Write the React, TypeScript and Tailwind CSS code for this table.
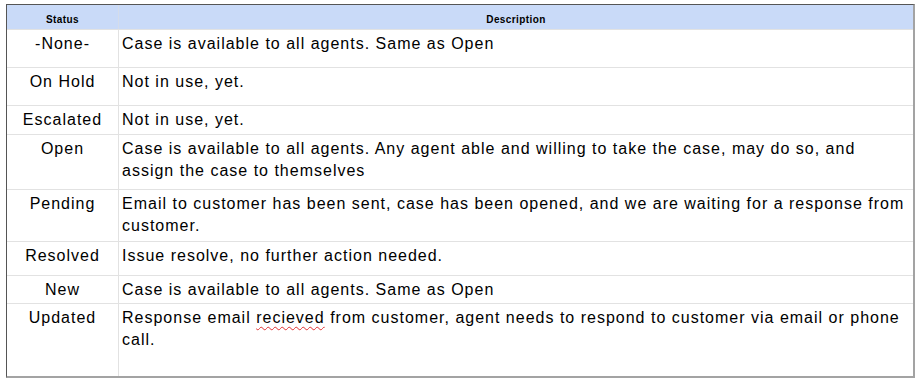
import React from 'react';

type Row = { status: string; description: React.ReactNode; height: string };

const rows: Row[] = [
    { status: '-None-', description: 'Case is available to all agents. Same as Open', height: 'h-[38px]' },
    { status: 'On Hold', description: 'Not in use, yet.', height: 'h-[38px]' },
    { status: 'Escalated', description: 'Not in use, yet.', height: 'h-[29px]' },
    {
        status: 'Open',
        description:
            'Case is available to all agents. Any agent able and willing to take the case, may do so, and assign the case to themselves',
        height: 'h-[55px]',
    },
    {
        status: 'Pending',
        description:
            'Email to customer has been sent, case has been opened, and we are waiting for a response from customer.',
        height: 'h-[52px]',
    },
    { status: 'Resolved', description: 'Issue resolve, no further action needed.', height: 'h-[34px]' },
    { status: 'New', description: 'Case is available to all agents. Same as Open', height: 'h-[28px]' },
    {
        status: 'Updated',
        description: (
            <>
                Response email{' '}
                <span className="underline decoration-wavy decoration-[#e03030] decoration-[1px] underline-offset-[3px]">
                    recieved
                </span>{' '}
                from customer, agent needs to respond to customer via email or phone call.
            </>
        ),
        height: 'h-[72px]',
    },
];

export default function App() {
    return (
        <div className="w-[922px] h-[380px] bg-white pl-[6px] pt-[4px] font-['Liberation_Sans',Arial,sans-serif] text-black">
            <div className="w-[909px] border-t border-l border-t-[#555] border-l-[#555] border-r-2 border-b-2 border-r-[#a3a3a3] border-b-[#a3a3a3]">
                <div className="flex h-[25px] bg-[#c9daf8] border-b border-[#e2e2e2] text-[10px] font-bold tracking-[0.4px]">
                    <div className="w-[112px] shrink-0 flex items-end justify-center pb-[2px] border-r border-[#d4dcea]">
                        Status
                    </div>
                    <div className="flex-1 flex items-end justify-center pb-[2px]">Description</div>
                </div>
                {rows.map((row, i) => (
                    <div
                        key={row.status}
                        className={`flex ${row.height} ${i < rows.length - 1 ? 'border-b border-[#e2e2e2]' : ''} text-[16px] leading-[22px] tracking-[1px]`}
                    >
                        <div className="w-[112px] shrink-0 text-center pt-[3px] border-r border-[#e2e2e2]">
                            {row.status}
                        </div>
                        <div className="flex-1 pl-[3px] pr-[4px] pt-[3px]">{row.description}</div>
                    </div>
                ))}
            </div>
        </div>
    );
}
